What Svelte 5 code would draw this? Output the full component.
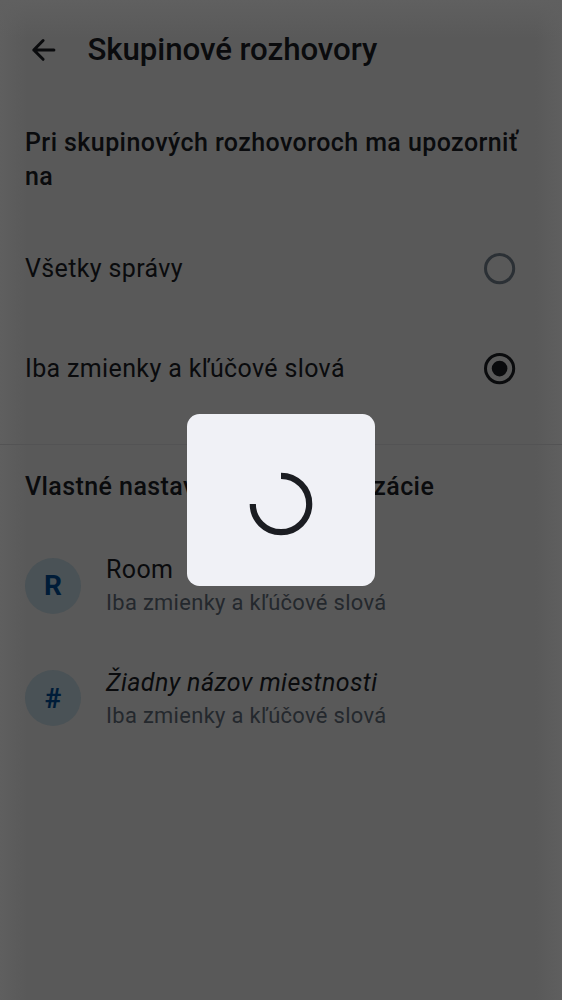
<script>
  let selected = $state('mentions');
  const options = [
    { id: 'all', label: 'Všetky správy' },
    { id: 'mentions', label: 'Iba zmienky a kľúčové slová' }
  ];
  const rooms = [
    { initial: 'R', name: 'Room', unnamed: false },
    { initial: '#', name: 'Žiadny názov miestnosti', unnamed: true }
  ];
</script>

<main class="screen">
  <header>
    <button class="back" aria-label="Späť">
      <svg width="26" height="24" viewBox="0 0 26 24" fill="none" stroke="currentColor" stroke-width="3" stroke-linecap="round" stroke-linejoin="round">
        <path d="M22.9 12H2.8M12.1 2.5 2.8 12 12.1 21.3" />
      </svg>
    </button>
    <h1>Skupinové rozhovory</h1>
  </header>

  <section class="options">
    <h2>Pri skupinových rozhovoroch ma upozorniť na</h2>
    {#each options as option}
      <button class="option" role="radio" aria-checked={selected === option.id} onclick={() => (selected = option.id)}>
        <span>{option.label}</span>
        <svg class:selected={selected === option.id} class="radio" width="32" height="32" viewBox="0 0 32 32">
          <circle cx="15.6" cy="15.6" r="14.1" fill="none" stroke="currentColor" stroke-width="3" />
          {#if selected === option.id}<circle cx="15.6" cy="15.6" r="7.8" fill="currentColor" />{/if}
        </svg>
      </button>
    {/each}
  </section>

  <section class="custom">
    <h2>Vlastné nastavenia pre konverzácie</h2>
    {#each rooms as room}
      <div class="room">
        <div class="avatar">{room.initial}</div>
        <div class="details">
          <div class="name" class:unnamed={room.unnamed}>{room.name}</div>
          <div class="mode">Iba zmienky a kľúčové slová</div>
        </div>
      </div>
    {/each}
  </section>

  <div class="overlay">
    <div class="dialog">
      <svg width="64" height="64" viewBox="0 0 64 64">
        <path d="M32 3.8A28.2 28.2 0 1 1 3.8 32" fill="none" stroke="#1b1d22" stroke-width="6.2" />
      </svg>
    </div>
  </div>
</main>

<style>
  :global(body) {
    background: #595959;
  }
  .screen {
    position: relative;
    box-sizing: border-box;
    width: 562px;
    height: 1000px;
    overflow: hidden;
    font-family: Roboto, sans-serif;
    color: #0a0b0d;
    background:
      linear-gradient(to bottom, #606060, rgba(96, 96, 96, 0) 38px),
      linear-gradient(to right, #5f5f5f, rgba(95, 95, 95, 0) 27px),
      linear-gradient(to left, #5f5f5f, rgba(95, 95, 95, 0) 27px),
      #595959;
  }
  button {
    padding: 0;
    border: 0;
    background: none;
    color: inherit;
    font: inherit;
  }
  header {
    display: flex;
    align-items: center;
    height: 100px;
    padding-left: 30.5px;
  }
  .back {
    display: flex;
    width: 57px;
  }
  h1 {
    margin: 0;
    font-size: 31.25px;
    line-height: 44px;
    font-weight: 500;
    letter-spacing: -0.08px;
  }
  h2 {
    margin: 0;
    padding: 0 25px;
    font-size: 25px;
    line-height: 34.4px;
    font-weight: 500;
    letter-spacing: 0.42px;
  }
  .options {
    box-sizing: border-box;
    height: 345px;
    padding-top: 26px;
    border-bottom: 1px solid #535354;
  }
  .options h2 {
    margin-bottom: 24px;
  }
  .option {
    display: flex;
    align-items: center;
    justify-content: space-between;
    width: 100%;
    height: 100px;
    padding: 0 46px 0 25px;
    font-size: 25px;
    letter-spacing: 0.36px;
  }
  .radio {
    color: #2b3035;
  }
  .radio.selected {
    color: #0a0b0d;
  }
  .custom {
    padding-top: 25px;
  }
  .custom h2 {
    margin-bottom: 25px;
  }
  .room {
    display: flex;
    align-items: center;
    gap: 25px;
    height: 112.5px;
    padding: 0 25px;
  }
  .avatar {
    display: grid;
    place-items: center;
    width: 56px;
    height: 56px;
    border-radius: 50%;
    background: #4a5256;
    color: #001c38;
    font-size: 28px;
    font-weight: 700;
  }
  .name {
    font-size: 25px;
    line-height: 36px;
    letter-spacing: 0.4px;
  }
  .unnamed {
    font-style: italic;
  }
  .mode {
    margin-bottom: 1.3px;
    font-size: 21.9px;
    line-height: 30px;
    letter-spacing: 0.33px;
    color: #24282d;
  }
  .overlay {
    position: absolute;
    inset: 0;
    display: grid;
    place-items: center;
  }
  .dialog {
    display: grid;
    place-items: center;
    width: 188px;
    height: 172px;
    border-radius: 12.5px;
    background: #f0f1f6;
  }
  .dialog svg {
    margin-top: 8.5px;
  }
</style>
